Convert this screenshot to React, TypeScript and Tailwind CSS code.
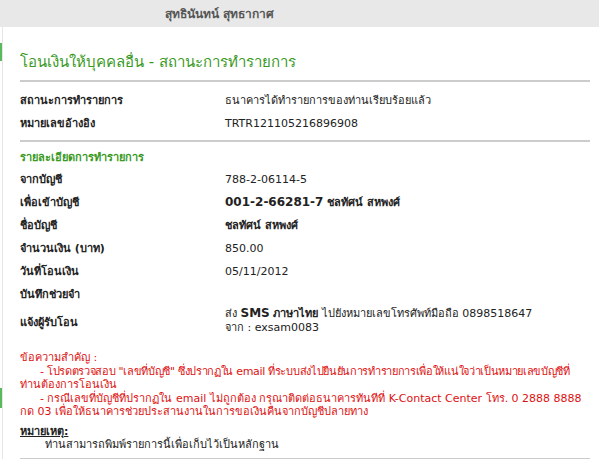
import React from "react";

const Row = ({ label, children, h = "h-[23px]" }: { label: string; children?: React.ReactNode; h?: string }) => (
  <div className={`flex items-center ${h}`}>
    <div className="w-[205px] shrink-0 font-bold text-[#222]">{label}</div>
    <div className="flex-1 text-[#222]">{children}</div>
  </div>
);

export default function App() {
  return (
    <div
      className="w-[599px] h-[459px] overflow-hidden bg-white text-[11px] leading-[14px]"
      style={{ fontFamily: '"DejaVu Sans", Verdana, sans-serif' }}
    >
      <div className="h-[27px] bg-[#e8e8e8] flex items-center">
        <div className="ml-[165px] text-[12px] font-bold text-[#555]">สุทธินันทน์ สุทธากาศ</div>
      </div>
      <div className="flex">
        <div className="w-[3px] shrink-0 border-r border-[#e6e6e6] h-[432px] flex flex-col">
          <div className="mt-[16px] h-[18px] bg-[#5cb85c]" />
          <div className="mt-[327px] h-[20px] bg-[#5cb85c]" />
        </div>
        <div className="ml-[17px] w-[570px]">
          <div className="h-[53px] flex items-end pb-[8px]">
            <div className="text-[15px] leading-[20px] text-[#3a9a1f]">
              โอนเงินให้บุคคลอื่น - สถานะการทำรายการ
            </div>
          </div>
          <div className="h-[2px] bg-[#cccccc]" />
          <div className="pt-[7px] pb-[5px]">
            <Row label="สถานะการทำรายการ">ธนาคารได้ทำรายการของท่านเรียบร้อยแล้ว</Row>
            <Row label="หมายเลขอ้างอิง">TRTR121105216896908</Row>
          </div>
          <div className="h-[2px] bg-[#cccccc]" />
          <div className="pt-[6px]">
            <div className="h-[20px] flex items-center font-bold text-[#3a9a1f]">รายละเอียดการทำรายการ</div>
            <Row label="จากบัญชี">788-2-06114-5</Row>
            <Row label="เพื่อเข้าบัญชี">
              <span className="font-bold text-[12px]">001-2-66281-7</span>{" "}
              <span className="font-bold">ชลทัศน์ สหพงศ์</span>
            </Row>
            <Row label="ชื่อบัญชี">
              <span className="font-bold">ชลทัศน์ สหพงศ์</span>
            </Row>
            <Row label="จำนวนเงิน (บาท)">850.00</Row>
            <Row label="วันที่โอนเงิน">05/11/2012</Row>
            <Row label="บันทึกช่วยจำ"></Row>
            <div className="flex items-center h-[33px]">
              <div className="w-[205px] shrink-0 font-bold text-[#222]">แจ้งผู้รับโอน</div>
              <div className="flex-1 text-[#222] leading-[14px] pb-[4px]">
                ส่ง <span className="font-bold text-[12px]">SMS</span> <span className="font-bold">ภาษาไทย</span> ไปยังหมายเลขโทรศัพท์มือถือ 0898518647
                <br />
                จาก : exsam0083
              </div>
            </div>
          </div>
          <div className="mt-[12px] text-[#dd1111] leading-[13.5px] whitespace-nowrap">
            <div>ข้อความสำคัญ :</div>
            <div className="pl-[20px] tracking-[-0.32px]">- โปรดตรวจสอบ "เลขที่บัญชี" ซึ่งปรากฏใน email ที่ระบบส่งไปยืนยันการทำรายการเพื่อให้แน่ใจว่าเป็นหมายเลขบัญชีที่</div>
            <div>ท่านต้องการโอนเงิน</div>
            <div className="pl-[20px]">- กรณีเลขที่บัญชีที่ปรากฏใน email ไม่ถูกต้อง กรุณาติดต่อธนาคารทันทีที่ K-Contact Center โทร. 0 2888 8888</div>
            <div>กด 03 เพื่อให้ธนาคารช่วยประสานงานในการขอเงินคืนจากบัญชีปลายทาง</div>
          </div>
          <div className="mt-[6px] text-[#222] leading-[13px]">
            <div className="font-bold underline">หมายเหตุ:</div>
            <div className="pl-[25px]">ท่านสามารถพิมพ์รายการนี้เพื่อเก็บไว้เป็นหลักฐาน</div>
          </div>
          <div className="mt-[7px] h-[2px] bg-[#cccccc]" />
        </div>
      </div>
    </div>
  );
}
